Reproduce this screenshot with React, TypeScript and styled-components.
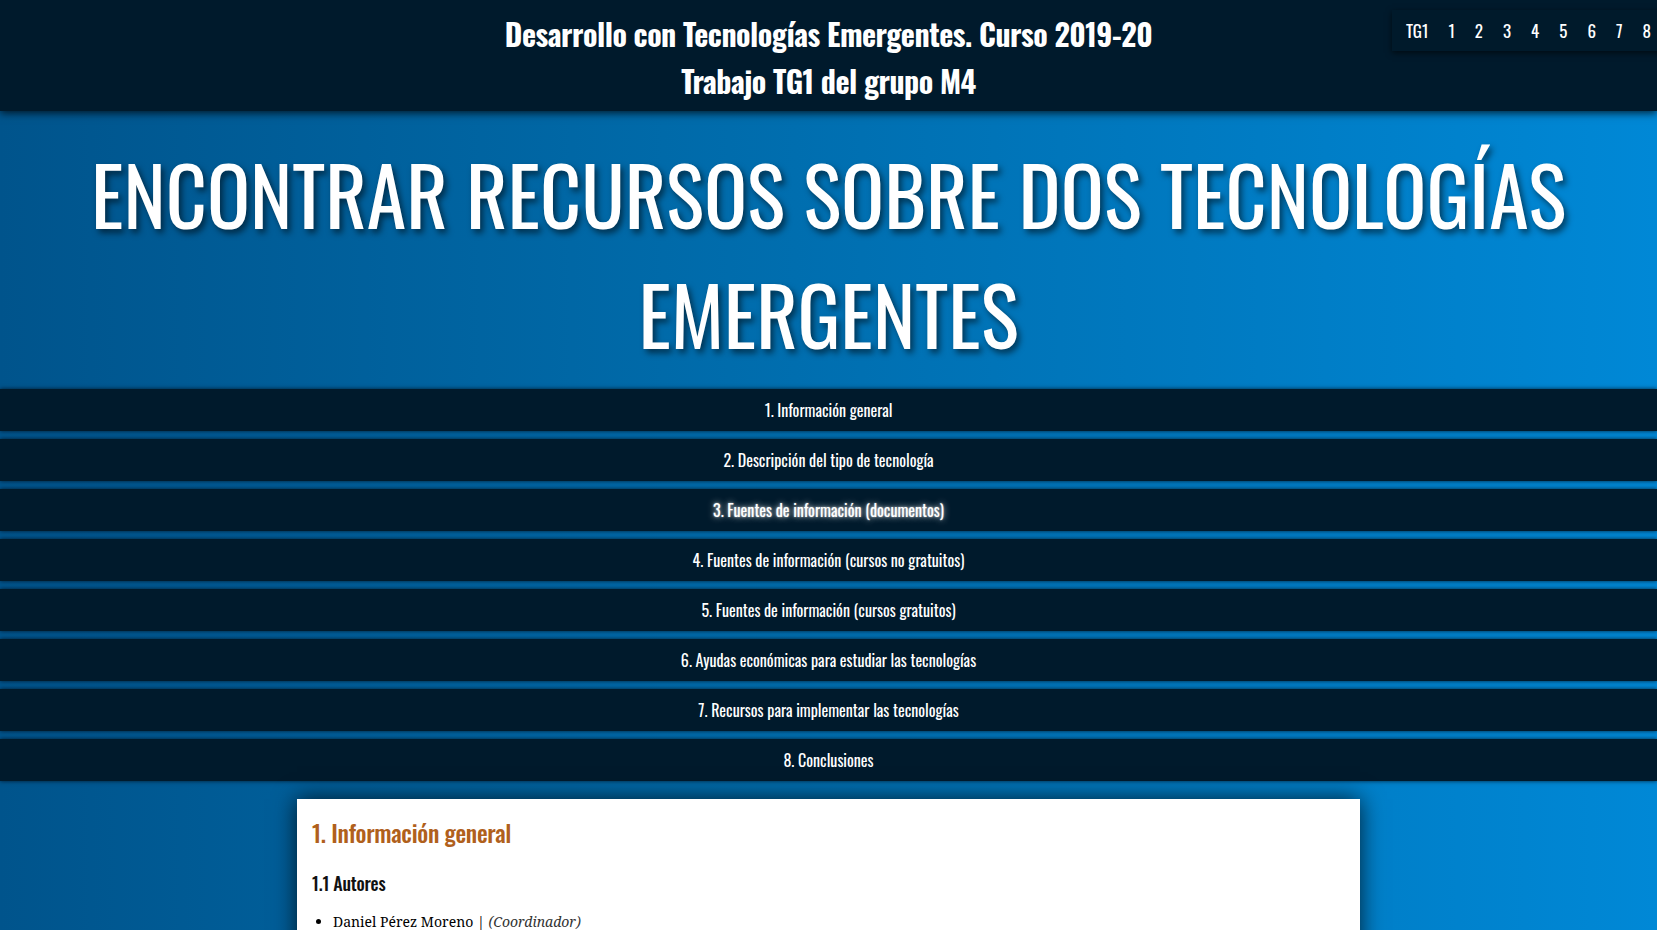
import React from "react";
import styled, { createGlobalStyle } from "styled-components";

const GlobalStyle = createGlobalStyle`
  html, body {
    margin: 0;
    padding: 0;
  }
  body {
    min-height: 100vh;
    font-family: "Oswald", "Roboto Condensed", "Liberation Sans", sans-serif;
    color: #fff;
    background: linear-gradient(to right, #00548c 0%, #006aa9 40%, #0088d6 100%);
    background-attachment: fixed;
    overflow: hidden;
  }
`;

const Page = styled.div`
  position: relative;
  height: 930px;
  overflow: hidden;
`;

const Header = styled.header`
  position: relative;
  z-index: 2;
  height: 111px;
  padding-top: 3px;
  box-sizing: border-box;
  background: #001a2c;
  box-shadow: 0 2px 8px rgba(0, 0, 0, 0.75);
  display: flex;
  flex-direction: column;
  align-items: center;
  justify-content: center;
`;

const HeaderTitle = styled.div`
  font-family: "Oswald", sans-serif;
  font-weight: 700;
  font-size: 30px;
  letter-spacing: -0.5px;
  line-height: 47px;
  color: #fff;
  text-align: center;
`;

const QuickNav = styled.nav`
  position: absolute;
  top: 10px;
  right: -12px;
  z-index: 3;
  display: flex;
  align-items: center;
  height: 41px;
  padding: 0 8px 0 4px;
  background: #001a2b;
  box-shadow: 0 2px 6px rgba(0, 0, 0, 0.6);
`;

const QuickLink = styled.a`
  font-family: "Oswald", sans-serif;
  font-weight: 400;
  font-size: 17px;
  color: #fff;
  text-decoration: none;
  padding: 0 10px;
  line-height: 41px;
`;

const Hero = styled.h1`
  margin: 0;
  padding: 22px 30px 16px;
  font-family: "Oswald", sans-serif;
  font-weight: 400;
  font-size: 80px;
  line-height: 120px;
  text-align: center;
  text-transform: uppercase;
  color: #fff;
  text-shadow: 3px 4px 6px rgba(0, 0, 0, 0.55);
`;

const Menu = styled.ul`
  list-style: none;
  margin: 0;
  padding: 0;
  display: flex;
  flex-direction: column;
  gap: 8px;
`;

const MenuItem = styled.li`
  height: 42px;
  background: #001a2c;
  box-shadow: 0 0 4px rgba(0, 10, 20, 0.8);
  display: flex;
  align-items: center;
  justify-content: center;
`;

const MenuLink = styled.a<{ $active?: boolean }>`
  font-family: "Oswald", sans-serif;
  font-weight: 400;
  font-size: 16px;
  color: #fff;
  text-decoration: none;
  text-shadow: ${(p) =>
    p.$active ? "0 0 6px rgba(255,255,255,0.85), 0 0 2px rgba(255,255,255,0.6)" : "none"};
`;

const Main = styled.main`
  padding-top: 18px;
  display: flex;
  justify-content: center;
`;

const Card = styled.section`
  width: 1063px;
  min-height: 300px;
  background: #fff;
  box-shadow: 0 0 22px rgba(0, 0, 0, 0.75);
  padding: 1px 15px 20px;
  box-sizing: border-box;
  color: #111;
`;

const SectionTitle = styled.h2`
  margin: 12px 0 0;
  font-family: "Oswald", sans-serif;
  font-weight: 500;
  font-size: 24px;
  letter-spacing: -0.3px;
  line-height: 40px;
  color: #b0601c;
`;

const SubTitle = styled.h3`
  margin: 16px 0 0;
  font-family: "Oswald", sans-serif;
  font-weight: 500;
  font-size: 18px;
  letter-spacing: -0.2px;
  line-height: 30px;
  color: #111;
`;

const Authors = styled.ul`
  margin: 12px 0 0;
  padding-left: 21px;
  font-family: "Noto Serif", "DejaVu Serif", "Liberation Serif", serif;
  font-size: 14px;
  line-height: 24px;
  color: #000;
`;

const Role = styled.em`
  color: #333;
`;

const sections = [
  "1. Información general",
  "2. Descripción del tipo de tecnología",
  "3. Fuentes de información (documentos)",
  "4. Fuentes de información (cursos no gratuitos)",
  "5. Fuentes de información (cursos gratuitos)",
  "6. Ayudas económicas para estudiar las tecnologías",
  "7. Recursos para implementar las tecnologías",
  "8. Conclusiones",
];

const quick = ["TG1", "1", "2", "3", "4", "5", "6", "7", "8"];

export default function App() {
  return (
    <Page>
      <GlobalStyle />
      <Header>
        <HeaderTitle>Desarrollo con Tecnologías Emergentes. Curso 2019-20</HeaderTitle>
        <HeaderTitle>Trabajo TG1 del grupo M4</HeaderTitle>
      </Header>
      <QuickNav>
        {quick.map((q) => (
          <QuickLink key={q} href="#">
            {q}
          </QuickLink>
        ))}
      </QuickNav>
      <Hero>Encontrar recursos sobre dos tecnologías emergentes</Hero>
      <Menu>
        {sections.map((s, i) => (
          <MenuItem key={s}>
            <MenuLink href="#" $active={i === 2}>
              {s}
            </MenuLink>
          </MenuItem>
        ))}
      </Menu>
      <Main>
        <Card>
          <SectionTitle>1. Información general</SectionTitle>
          <SubTitle>1.1 Autores</SubTitle>
          <Authors>
            <li>
              Daniel Pérez Moreno | <Role>(Coordinador)</Role>
            </li>
          </Authors>
        </Card>
      </Main>
    </Page>
  );
}
